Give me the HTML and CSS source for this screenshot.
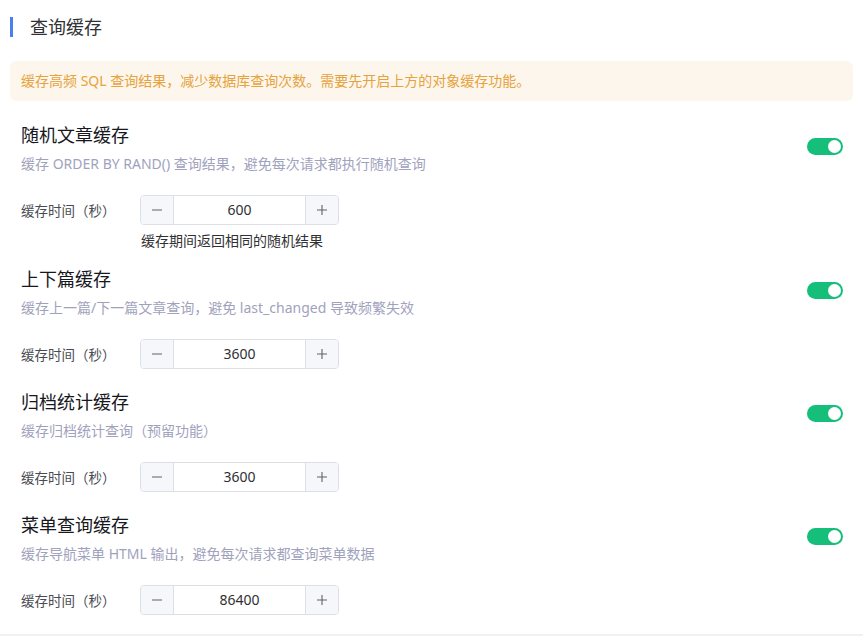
FILE: index.html
```html
<!DOCTYPE html>
<html lang="zh-CN">
<head>
    <meta charset="UTF-8">
    <meta name="viewport" content="width=device-width, initial-scale=1.0">
    <title>查询缓存</title>
    <link rel="stylesheet" href="styles.css">
</head>
<body>
    <div class="page">
        <!-- Section header -->
        <div class="panel-head">
            <span class="panel-bar"></span>
            <h2 class="panel-title">查询缓存</h2>
        </div>

        <div class="alert">缓存高频 SQL 查询结果，减少数据库查询次数。需要先开启上方的对象缓存功能。</div>

        <!-- Random posts -->
        <div class="item">
            <div class="item-head">
                <div>
                    <div class="item-title">随机文章缓存</div>
                    <div class="item-desc">缓存 ORDER BY RAND() 查询结果，避免每次请求都执行随机查询</div>
                </div>
                <span class="switch on"><span class="knob"></span></span>
            </div>
            <div class="field">
                <label class="field-label">缓存时间（秒）</label>
                <div class="num-input">
                    <span class="num-btn"><svg width="12" height="12" viewBox="0 0 12 12"><path d="M1 6h10" stroke="#606266" stroke-width="1.1"/></svg></span>
                    <span class="num-value">600</span>
                    <span class="num-btn"><svg width="12" height="12" viewBox="0 0 12 12"><path d="M1 6h10M6 1v10" stroke="#606266" stroke-width="1.1"/></svg></span>
                </div>
            </div>
            <div class="field-hint">缓存期间返回相同的随机结果</div>
        </div>

        <!-- Adjacent posts -->
        <div class="item">
            <div class="item-head">
                <div>
                    <div class="item-title">上下篇缓存</div>
                    <div class="item-desc">缓存上一篇/下一篇文章查询，避免 last_changed 导致频繁失效</div>
                </div>
                <span class="switch on"><span class="knob"></span></span>
            </div>
            <div class="field">
                <label class="field-label">缓存时间（秒）</label>
                <div class="num-input">
                    <span class="num-btn"><svg width="12" height="12" viewBox="0 0 12 12"><path d="M1 6h10" stroke="#606266" stroke-width="1.1"/></svg></span>
                    <span class="num-value">3600</span>
                    <span class="num-btn"><svg width="12" height="12" viewBox="0 0 12 12"><path d="M1 6h10M6 1v10" stroke="#606266" stroke-width="1.1"/></svg></span>
                </div>
            </div>
        </div>

        <!-- Archive stats -->
        <div class="item">
            <div class="item-head">
                <div>
                    <div class="item-title">归档统计缓存</div>
                    <div class="item-desc">缓存归档统计查询（预留功能）</div>
                </div>
                <span class="switch on"><span class="knob"></span></span>
            </div>
            <div class="field">
                <label class="field-label">缓存时间（秒）</label>
                <div class="num-input">
                    <span class="num-btn"><svg width="12" height="12" viewBox="0 0 12 12"><path d="M1 6h10" stroke="#606266" stroke-width="1.1"/></svg></span>
                    <span class="num-value">3600</span>
                    <span class="num-btn"><svg width="12" height="12" viewBox="0 0 12 12"><path d="M1 6h10M6 1v10" stroke="#606266" stroke-width="1.1"/></svg></span>
                </div>
            </div>
        </div>

        <!-- Menu -->
        <div class="item">
            <div class="item-head">
                <div>
                    <div class="item-title">菜单查询缓存</div>
                    <div class="item-desc">缓存导航菜单 HTML 输出，避免每次请求都查询菜单数据</div>
                </div>
                <span class="switch on"><span class="knob"></span></span>
            </div>
            <div class="field">
                <label class="field-label">缓存时间（秒）</label>
                <div class="num-input">
                    <span class="num-btn"><svg width="12" height="12" viewBox="0 0 12 12"><path d="M1 6h10" stroke="#606266" stroke-width="1.1"/></svg></span>
                    <span class="num-value">86400</span>
                    <span class="num-btn"><svg width="12" height="12" viewBox="0 0 12 12"><path d="M1 6h10M6 1v10" stroke="#606266" stroke-width="1.1"/></svg></span>
                </div>
            </div>
        </div>
    </div>
    <div class="page-foot"></div>
</body>
</html>
```

FILE: styles.css
```css
/* Query cache settings panel */
body {
    font-family: "Noto Sans", "Noto Sans CJK SC", sans-serif;
    margin: 0;
    padding: 0;
    background-color: #fff;
    color: #303133;
}
.page {
    padding: 0 10px 19px 10px;
}
.panel-head {
    display: flex;
    align-items: center;
    height: 20px;
    margin-top: 17px;
}
.panel-bar {
    width: 3px;
    height: 20px;
    background-color: #4a7ff0;
}
.panel-title {
    margin: 0 0 0 17px;
    font-size: 18px;
    line-height: 20px;
    font-weight: 400;
    color: #303133;
}
.alert {
    margin-top: 24px;
    height: 40px;
    line-height: 40px;
    padding: 0 11px;
    border-radius: 6px;
    background-color: #fdf6ec;
    color: #e6a23c;
    font-size: 14px;
}
.item {
    padding: 0 10px 0 11px;
    margin-top: 21px;
}
.alert + .item {
    margin-top: 22px;
}
.item-head {
    display: flex;
    justify-content: space-between;
    align-items: flex-start;
}
.item-title {
    font-size: 18px;
    line-height: 24px;
    font-weight: 400;
    color: #16181d;
}
.item-desc {
    margin-top: 7px;
    font-size: 14px;
    line-height: 20px;
    color: #9fa2bd;
}
.switch {
    margin-top: 15px;
    width: 36px;
    height: 17px;
    border-radius: 9px;
    background-color: #15bf79;
    display: flex;
    align-items: center;
    justify-content: flex-end;
    padding: 0 2px;
    box-sizing: border-box;
}
.knob {
    width: 13px;
    height: 13px;
    border-radius: 50%;
    background-color: #fff;
}
.field {
    display: flex;
    align-items: center;
    margin-top: 21px;
}
.field-label {
    width: 119px;
    font-size: 13.5px;
    color: #494b52;
}
.num-input {
    display: flex;
    width: 199px;
    height: 30px;
    box-sizing: border-box;
    border: 1px solid #dcdfe6;
    border-radius: 4px;
    overflow: hidden;
}
.num-btn {
    width: 32px;
    display: flex;
    align-items: center;
    justify-content: center;
    background-color: #f5f7fa;
}
.num-btn:first-child {
    border-right: 1px solid #dcdfe6;
}
.num-btn:last-child {
    border-left: 1px solid #dcdfe6;
}
.num-value {
    flex: 1;
    text-align: center;
    line-height: 28px;
    font-size: 14px;
    color: #303133;
}
.field-hint {
    margin: 8px 0 -3px 120px;
    font-size: 14px;
    line-height: 16px;
    color: #303133;
}
.page-foot {
    height: 10px;
    background-color: #f0f1f3;
}
```
